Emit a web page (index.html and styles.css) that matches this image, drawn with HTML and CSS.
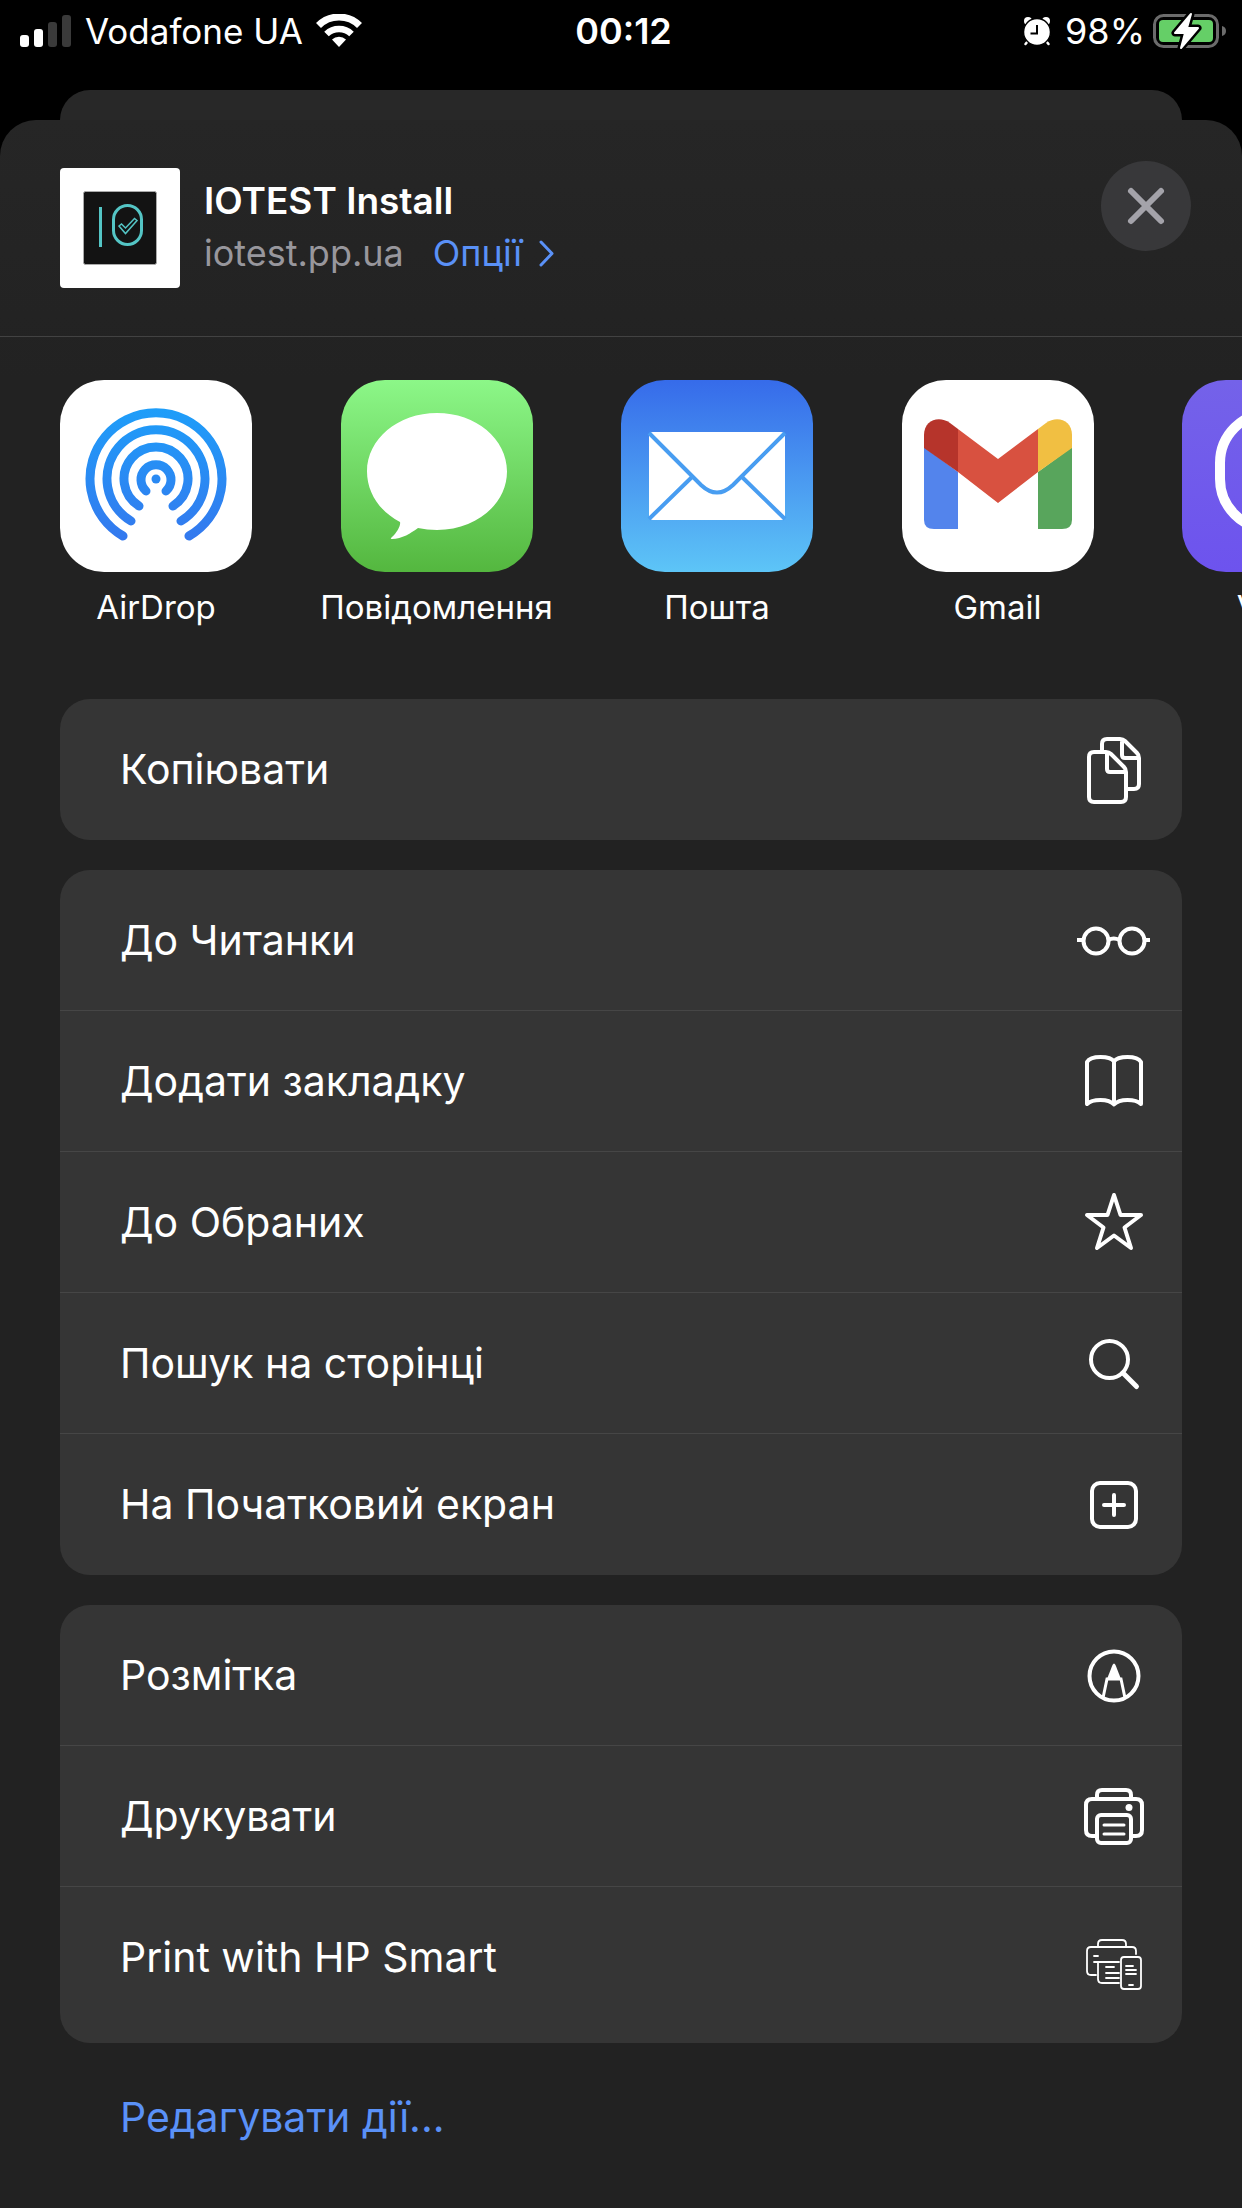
FILE: index.html
```html
<!DOCTYPE html>
<html lang="uk">
<head>
<meta charset="utf-8">
<meta name="viewport" content="width=device-width, initial-scale=1">
<title>IOTEST Install</title>
<link rel="stylesheet" href="styles.css">
</head>
<body>
<header class="status">
  <div class="status-side">
    <svg class="signal" width="52" height="34" viewBox="0 0 52 34"><g fill="#fff"><rect x="0" y="21" width="9" height="12" rx="3"/><rect x="14" y="15" width="9" height="18" rx="3"/></g><g fill="#3a3a3a"><rect x="28" y="8" width="9" height="25" rx="3"/><rect x="42" y="1" width="9" height="32" rx="3"/></g></svg>
    <span class="carrier">Vodafone UA</span>
    <svg width="46" height="34" viewBox="0 0 46 34" fill="none" stroke="#fff"><path d="M2.500 11.500a29 29 0 0 1 41 0" stroke-width="7"/><path d="M10.500 20a18 18 0 0 1 25 0" stroke-width="6.500"/><path d="M23 33l-7-7.500a10 10 0 0 1 14 0z" fill="#fff" stroke="none"/></svg>
  </div>
  <time class="clock">00:12</time>
  <div class="status-side status-side--end">
    <svg class="alarm" width="28" height="30" viewBox="0 0 28 30"><path d="M5 25l-2.500 3M23 25l2.500 3" stroke="#fff" stroke-width="2.500" stroke-linecap="round"/><circle cx="5" cy="5" r="4" fill="#fff"/><circle cx="23" cy="5" r="4" fill="#fff"/><circle cx="14" cy="16" r="13.500" fill="#fff" stroke="#000" stroke-width="1.500"/><path d="M14 9v8.500H7.500" fill="none" stroke="#000" stroke-width="2"/></svg>
    <span class="percent">98%</span>
    <svg width="74" height="38" viewBox="0 0 74 38"><rect x="1.500" y="3.500" width="63" height="31" rx="9" fill="none" stroke="#6b6b6b" stroke-width="3"/><rect x="6" y="8" width="54" height="22" rx="4" fill="#65cf67"/><path d="M69 14q4 1 4 5t-4 5z" fill="#6b6b6b"/><path d="M38 2L22 21h10l-4 15 17-20H34z" fill="#fff" stroke="#000" stroke-width="7" stroke-linejoin="round"/><path d="M38 2L22 21h10l-4 15 17-20H34z" fill="#fff" stroke="#fff" stroke-width="2" stroke-linejoin="round"/></svg>
  </div>
</header>
<div class="backdrop-sheet"></div>
<main class="sheet">
  <section class="summary">
    <svg class="thumb" viewBox="0 0 120 120"><rect width="120" height="120" rx="4" fill="#fff"/><rect x="23.500" y="23.500" width="73" height="73" rx="2" fill="#131313" stroke="#aaa" stroke-width="1"/><g fill="none" stroke="#54c5c5"><path d="M40.500 39v40" stroke-width="3"/><rect x="53.500" y="37.500" width="28" height="39" rx="14" stroke-width="3"/><path d="M59 58l2.500-2 4 4 9-9.500 2.500 2-11.500 13z" stroke-width="1.500"/></g></svg>
    <div class="summary-text">
      <h1 class="title">IOTEST Install</h1>
      <p class="subtitle"><span>iotest.pp.ua</span><a class="options" href="#options">Опції<svg width="16" height="30" viewBox="0 0 16 30" fill="none" stroke="currentColor" stroke-width="3" stroke-linecap="round" stroke-linejoin="round"><path d="M3 4l11 11.500L3 27"/></svg></a></p>
    </div>
    <button class="close" type="button" aria-label="Закрити"><svg width="40" height="40" viewBox="0 0 40 40" stroke="#a4a3aa" stroke-width="6" stroke-linecap="round"><path d="M5 5l30 30M35 5L5 35"/></svg></button>
  </section>

  <nav class="apps">
    <a class="app" href="#airdrop">
      <svg class="app-icon" viewBox="0 0 192 192"><defs><linearGradient id="air" gradientUnits="userSpaceOnUse" x1="0" y1="28" x2="0" y2="162"><stop offset="0" stop-color="#1e9ef9"/><stop offset="1" stop-color="#3478ee"/></linearGradient></defs><rect width="192" height="192" fill="#fff"/><circle cx="96" cy="99" r="4.500" fill="url(#air)"/><g fill="none" stroke="url(#air)" stroke-width="9" stroke-linecap="round"><path d="M86 111a15 15 0 1 1 20 0"/><path d="M79 126a32 32 0 1 1 34 0"/><path d="M71 141a49 49 0 1 1 50 0"/><path d="M63 156a66 66 0 1 1 66 0"/></g></svg>
      <span>AirDrop</span>
    </a>
    <a class="app" href="#messages">
      <svg class="app-icon" viewBox="0 0 192 192"><defs><linearGradient id="msg" x2="0" y2="1"><stop offset="0" stop-color="#8cf788"/><stop offset="1" stop-color="#54b73f"/></linearGradient></defs><rect width="192" height="192" fill="url(#msg)"/><path d="M96 33c39 0 70 26 70 58.500S135 150 96 150q-10 0-19-2c-7 5-16 11-26 11-2 0-1-1 0-2 5-4 9-12 8-15C38 131 26 112 26 91.500 26 59 57 33 96 33z" fill="#fff"/></svg>
      <span>Повідомлення</span>
    </a>
    <a class="app" href="#mail">
      <svg class="app-icon" viewBox="0 0 192 192"><defs><linearGradient id="mail" x2="0" y2="1"><stop offset="0" stop-color="#366bea"/><stop offset="1" stop-color="#5dc5f7"/></linearGradient></defs><rect width="192" height="192" fill="url(#mail)"/><rect x="28" y="52" width="136" height="88" rx="4" fill="#fff"/><g fill="none" stroke="#489df1" stroke-width="4"><path d="M28 53l52 52q16 15 32 0l52-52M28 139l43-42M164 139l-43-42"/></g></svg>
      <span>Пошта</span>
    </a>
    <a class="app" href="#gmail">
      <svg class="app-icon" viewBox="0 0 192 192"><rect width="192" height="192" fill="#fff"/><path d="M22 67l34 25v57H32q-10 0-10-9z" fill="#5384ec"/><path d="M170 67l-34 25v57h24q10 0 10-9z" fill="#58a55c"/><path d="M56 49l40 30 40-30v43l-40 31-40-31z" fill="#d85140"/><path d="M22 68V55c0-15 15-20 26-12l8 6v43z" fill="#b6342b"/><path d="M170 68V55c0-15-15-20-26-12l-8 6v43z" fill="#f1bf42"/></svg>
      <span>Gmail</span>
    </a>
    <a class="app" href="#viber">
      <svg class="app-icon" viewBox="0 0 192 192"><defs><linearGradient id="vib" x2="0" y2="1"><stop offset="0" stop-color="#7462e9"/><stop offset="1" stop-color="#6d53ee"/></linearGradient></defs><rect width="192" height="192" fill="url(#vib)"/><rect x="38" y="33" width="116" height="116" rx="50" fill="none" stroke="#fff" stroke-width="10"/></svg>
      <span>Viber</span>
    </a>
  </nav>

  <div class="groups">
    <div class="group">
      <button class="row" type="button"><span class="label">Копіювати</span><svg class="icon" viewBox="0 0 80 80"><g fill="none" stroke="#fff" stroke-width="4" stroke-linejoin="round"><path d="M28 21v-7q0-5 5-5h13q3 0 5 2l12 12q2 2 2 5v26q0 5-5 5h-7M48 10v15q0 3 3 3h13"/><path d="M20 22h12q3 0 5 2l13 13q2 2 2 5v25q0 5-5 5H20q-5 0-5-5V27q0-5 5-5zM33 23v16q0 3 3 3h15"/></g></svg></button>
    </div>
    <div class="group">
      <button class="row" type="button"><span class="label">До Читанки</span><svg class="icon" viewBox="0 0 80 80"><g fill="none" stroke="#fff" stroke-width="4"><circle cx="22" cy="41" r="12.500"/><circle cx="58" cy="41" r="12.500"/><path d="M34.500 40q5-3 11 0M3 40h7M70 40h6"/></g></svg></button>
      <button class="row" type="button"><span class="label">Додати закладку</span><svg class="icon" viewBox="0 0 80 80"><path d="M40 20v43M13 63V21q3-5 13.500-5T40 20.500Q43 16 53.500 16T67 21v42q-4-4-13.500-4T40 63.500q-4-4.500-13.500-4.500T13 63z" fill="none" stroke="#fff" stroke-width="4" stroke-linejoin="round"/></svg></button>
      <button class="row" type="button"><span class="label">До Обраних</span><svg class="icon" viewBox="0 0 80 80"><path d="M40 13l6.500 20H67L50.500 45.500 57 66 40 53.500 23 66l6.500-20.500L13 33h20.500z" fill="none" stroke="#fff" stroke-width="4" stroke-linejoin="round"/></svg></button>
      <button class="row" type="button"><span class="label">Пошук на сторінці</span><svg class="icon" viewBox="0 0 80 80"><circle cx="35.500" cy="36.500" r="18.500" fill="none" stroke="#fff" stroke-width="4"/><path d="M49 50l13.500 13.500" stroke="#fff" stroke-width="5" stroke-linecap="round"/></svg></button>
      <button class="row" type="button"><span class="label">На Початковий екран</span><svg class="icon" viewBox="0 0 80 80"><g fill="none" stroke="#fff" stroke-width="4" stroke-linecap="round"><rect x="18" y="18" width="44" height="44" rx="8"/><path d="M40 30v20M30 40h20"/></g></svg></button>
    </div>
    <div class="group">
      <button class="row" type="button"><span class="label">Розмітка</span><svg class="icon" viewBox="0 0 80 80"><circle cx="40" cy="41" r="24.500" fill="none" stroke="#fff" stroke-width="4"/><path d="M29 63l4-19h14l4 19" fill="none" stroke="#fff" stroke-width="3"/><path d="M33 44l5.500-14q1.500-3 3 0L47 44z" fill="#fff"/></svg></button>
      <button class="row" type="button"><span class="label">Друкувати</span><svg class="icon" viewBox="0 0 80 80"><g fill="none" stroke="#fff" stroke-width="4" stroke-linecap="round"><path d="M23 23v-4q0-5 5-5h24q5 0 5 5v4M23 60h-5q-6 0-6-6V29q0-6 6-6h44q6 0 6 6v25q0 6-6 6h-5"/><rect x="23" y="39" width="34" height="28" rx="4"/><path d="M30 49h20M30 58h20" stroke-width="3"/></g><circle cx="55" cy="31.500" r="3.500" fill="#fff"/></svg></button>
      <button class="row row--tall" type="button"><span class="label">Print with HP Smart</span><svg class="icon" viewBox="0 0 80 80"><g fill="none" stroke="#fff" stroke-width="1.800" stroke-linecap="round" stroke-linejoin="round"><path d="M24 22v-3q0-4 4-4h20q4 0 4 4v3M22 50h-5q-4 0-4-4V26q0-4 4-4h41q4 0 4 4v3M20 37h25M24 37v17q0 4 4 4h17M20 31h4M32 42h8M32 48h13M32 53h13"/><rect x="47" y="32" width="20" height="32" rx="3"/><path d="M52 41h7M52 45h10M52 49h10M55 60h4"/></g></svg></button>
    </div>
  </div>
  <a class="edit" href="#edit">Редагувати дії...</a>
</main>
</body>
</html>
```

FILE: styles.css
```css
* { box-sizing: border-box; }

body {
  margin: 0;
  min-height: 100vh;
  display: flex;
  flex-direction: column;
  background: #000;
  color: #fff;
  font-family: Inter, "Noto Sans", sans-serif;
  overflow-x: hidden;
}

svg { display: block; flex: none; }
a { color: inherit; text-decoration: none; }
button { border: 0; padding: 0; color: inherit; font: inherit; }

.status {
  display: grid;
  grid-template-columns: 1fr auto 1fr;
  align-items: center;
  height: 62px;
  margin-bottom: 28px;
  padding: 0 15px 0 20px;
  font-size: 36px;
  line-height: 62px;
}
.status-side { display: flex; align-items: center; gap: 13px; }
.status-side--end { justify-content: flex-end; gap: 8px; }
.carrier { font-size: 35px; }
.alarm { margin-right: 6px; }
.clock { font-weight: 600; }

.backdrop-sheet {
  height: 30px;
  margin: 0 60px;
  border-radius: 30px 30px 0 0;
  background: #282828;
}

.sheet {
  flex: 1;
  border-radius: 36px 36px 0 0;
  background: linear-gradient(#262626, #222 260px);
}

.summary {
  display: flex;
  align-items: flex-start;
  height: 217px;
  padding: 41px 51px 0 60px;
  border-bottom: 1px solid #424242;
}
.thumb { width: 120px; height: 120px; margin-top: 7px; }
.summary-text { flex: 1; padding: 14px 0 0 24px; }
.title, .subtitle { margin: 0; line-height: 52px; }
.title { font-size: 37px; font-weight: 600; }
.subtitle { display: flex; gap: 29px; color: #98979d; font-size: 36px; }
.options { display: flex; align-items: center; gap: 16px; color: #5a91f7; }
.close {
  display: grid;
  place-items: center;
  width: 90px;
  height: 90px;
  border-radius: 50%;
  background: #38383a;
}

.apps {
  display: grid;
  grid-auto-flow: column;
  grid-auto-columns: 25%;
  padding: 43px 60px 0;
  overflow: hidden;
}
.app {
  display: flex;
  flex-direction: column;
  align-items: center;
  gap: 12px;
  width: 192px;
  font-size: 33px;
  line-height: 46px;
  white-space: nowrap;
}
.app-icon { width: 192px; height: 192px; border-radius: 44px; }

.groups {
  display: flex;
  flex-direction: column;
  gap: 30px;
  padding: 69px 60px 0;
}
.group { border-radius: 30px; background: #353535; overflow: hidden; }
.row {
  display: flex;
  align-items: center;
  justify-content: space-between;
  width: 100%;
  min-height: 141px;
  padding: 0 28px 0 60px;
  background: none;
  text-align: left;
}
.row:not(:last-child) { border-bottom: 1px solid #464646; }
.row--tall { min-height: 156px; }
.label { align-self: flex-start; font-size: 41px; line-height: 140px; }
.icon { width: 80px; height: 80px; }

.edit {
  display: block;
  padding: 0 120px;
  color: #5a91f7;
  font-size: 41px;
  line-height: 148px;
}
```
